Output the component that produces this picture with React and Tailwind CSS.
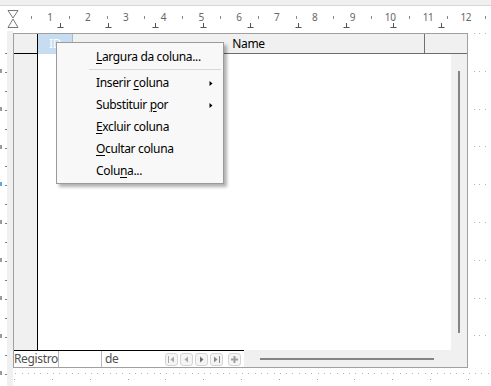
import React from 'react';

const CM = 37.8;
const ORIGIN = 12.2;

const Ruler = () => {
  const nums = Array.from({ length: 12 }, (_, i) => i + 1);
  const halves = Array.from({ length: 13 }, (_, i) => ORIGIN + CM * (i + 0.5));
  const tabs = Array.from({ length: 9 }, (_, i) => 60 + i * 47.6);
  return (
    <div className="relative h-[25px] bg-white">
      <svg className="absolute left-0 top-0" width="491" height="25">
        <path d="M8 4.5H18L13 12Z M13 13L18 21.5H8Z" fill="none" stroke="#777" strokeWidth="1" />
        {halves.map((x, i) => (
          <line key={'h' + i} x1={Math.round(x) + 0.5} x2={Math.round(x) + 0.5} y1="10" y2="13" stroke="#8a8a8a" />
        ))}
        {tabs.map((x, i) => (
          <g key={'t' + i} stroke="#555">
            <line x1={Math.round(x) + 0.5} x2={Math.round(x) + 0.5} y1="17" y2="21" />
            <line x1={Math.round(x) - 2.5} x2={Math.round(x) + 3.5} y1="21.5" y2="21.5" />
          </g>
        ))}
      </svg>
      {nums.map((n) => (
        <span
          key={n}
          className="absolute top-[5px] w-[16px] -ml-[8px] text-center text-[10px] leading-[12px] text-[#666]"
          style={{ left: ORIGIN + n * CM }}
        >
          {n}
        </span>
      ))}
    </div>
  );
};

const VRuler = () => {
  const ticks = Array.from({ length: 18 }, (_, i) => 22 + i * 18.9);
  const marks = Array.from({ length: 9 }, (_, i) => 40 + i * 37.8);
  return (
    <svg width="7" height="355" className="block">
      {ticks.map((y, i) => (
        <line key={i} x1="5" x2="7" y1={Math.round(y) + 0.5} y2={Math.round(y) + 0.5} stroke={i === 1 || i === 7 ? '#4a8fd0' : '#7a7a7a'} />
      ))}
      {marks.map((y, i) => (
        <rect key={i} x="0" y={Math.round(y) - 2} width="2" height="4" fill={i === 3 ? '#6aa0d8' : '#9a9a9a'} />
      ))}
    </svg>
  );
};

const RightDots = () => (
  <svg width="23" height="335" className="block bg-white">
    {Array.from({ length: 9 }, (_, k) => (
      <g key={k} fill="#b4b4b4">
        {[6, 11, 17].map((x) => (
          <rect key={x} x={x} y={Math.round(k * CM)} width="1" height="1" />
        ))}
      </g>
    ))}
  </svg>
);

const BottomDots = () => (
  <svg width="478" height="18" className="block bg-white">
    {Array.from({ length: 78 }, (_, k) => (
      <rect key={k} x={Math.round(ORIGIN + 6.3 * k - 13 + 3)} y="5" width="1" height="1" fill="#b4b4b4" />
    ))}
    {Array.from({ length: 13 }, (_, k) => (
      <rect key={'b' + k} x={Math.round(ORIGIN + CM * k - 13 + 2)} y="11" width="1" height="1" fill="#a0a0a0" />
    ))}
  </svg>
);

const NavBtn = ({ children, className = '' }) => (
  <div className={`w-[13px] h-[13px] rounded-[3px] border border-[#d4d4d4] bg-[#f5f5f5] flex items-center justify-center ${className}`}>
    {children}
  </div>
);

const Grid = () => (
  <div className="w-[455px] h-[335px] border border-[#a0a0a0] flex flex-col bg-[#f0f0f0]">
    <div className="flex h-[20px]">
      <div className="w-[24px] bg-[#f0f0f0] border-r border-b border-black" />
      <div className="w-[35px] bg-[#c6dcf0] border-r border-[#a8bccf] flex items-center justify-center text-white text-[12px]">
        ID
      </div>
      <div className="w-[352px] border-r border-b border-[#707070] border-b-[#6c6c6c] flex items-center justify-center text-[12px] text-black">
        Name
      </div>
      <div className="flex-1 border-b border-[#6c6c6c]" />
    </div>
    <div className="flex flex-1">
      <div className="flex flex-col w-[437px]">
        <div className="flex flex-1">
          <div className="w-[24px] bg-[#f0f0f0] border-r border-black" />
          <div className="flex-1 bg-white" />
        </div>
        <div className="flex h-[17px]">
          <div className="flex w-[230px] border-t border-black bg-white text-[#505050] text-[12px]">
            <div className="w-[45px] border-r border-[#b8b8b8] leading-[15px] whitespace-nowrap">Registro</div>
            <div className="w-[43px] border-r border-[#b8b8b8]" />
            <div className="w-[63px] pl-[3px] leading-[15px]">de</div>
            <div className="flex items-center gap-[2px]">
              <NavBtn>
                <svg width="7" height="7"><rect x="0" y="0" width="1" height="7" fill="#a8a8a8" /><path d="M6 0.5L2.5 3.5L6 6.5Z" fill="#a8a8a8" /></svg>
              </NavBtn>
              <NavBtn>
                <svg width="5" height="7"><path d="M4 0.5L0.5 3.5L4 6.5Z" fill="#a8a8a8" /></svg>
              </NavBtn>
              <NavBtn>
                <svg width="5" height="7"><path d="M1 0.5L4.5 3.5L1 6.5Z" fill="#6e6e6e" /></svg>
              </NavBtn>
              <NavBtn>
                <svg width="7" height="7"><path d="M1 0.5L4.5 3.5L1 6.5Z" fill="#8a8a8a" /><rect x="6" y="0" width="1" height="7" fill="#8a8a8a" /></svg>
              </NavBtn>
              <NavBtn className="ml-[3px]">
                <svg width="7" height="7"><path d="M2.5 0H4.5V2.5H7V4.5H4.5V7H2.5V4.5H0V2.5H2.5Z" fill="#a0a0a0" /></svg>
              </NavBtn>
            </div>
          </div>
          <div className="flex-1 bg-[#f0f0f0] pl-[16px] pt-[8px]">
            <div className="w-[174px] h-[2px] bg-[#848484]" />
          </div>
        </div>
      </div>
      <div className="w-[16px] bg-[#f0f0f0] pt-[17px] pl-[7px]">
        <div className="w-[2px] h-[262px] bg-[#848484]" />
      </div>
    </div>
  </div>
);

const Arrow = () => (
  <svg width="4" height="7" className="ml-auto">
    <path d="M0.5 1L3.5 3.5L0.5 6Z" fill="#000" />
  </svg>
);

const Item = ({ children, sub }) => (
  <div className="flex items-center h-[22px] pl-[39px] pr-[10px] whitespace-nowrap">
    <span>{children}</span>
    {sub && <Arrow />}
  </div>
);

const U = ({ children }) => <span className="underline underline-offset-[2px] decoration-1">{children}</span>;

const ContextMenu = () => (
  <div className="absolute left-[56px] top-[42px] w-[168px] border border-[#9a9a9a] bg-[#f8f8f8] pt-[3px] pb-[1px] text-[12px] text-black shadow-[3px_3px_3px_rgba(0,0,0,0.3)]">
    <Item><U>L</U>argura da coluna...</Item>
    <div className="h-[4px] pt-[1px] pl-[32px] pr-[2px]">
      <div className="h-[1px] bg-[#d8d8d8]" />
    </div>
    <Item sub>Inserir <U>c</U>oluna</Item>
    <Item sub>Substituir <U>p</U>or</Item>
    <Item><U>E</U>xcluir coluna</Item>
    <Item><U>O</U>cultar coluna</Item>
    <Item>Colu<U>n</U>a...</Item>
  </div>
);

export default function App() {
  return (
    <div className="relative w-[491px] h-[386px] overflow-hidden bg-white font-['Noto_Sans',sans-serif] tracking-[-0.35px]">
      <div className="h-[6px] bg-[#f0f0f0] border-b border-[#d6d6d6]" />
      <Ruler />
      <div className="flex h-[355px]">
        <VRuler />
        <div className="w-[6px] bg-[#f0f0f0]" />
        <div className="flex flex-col">
          <div className="h-[2px]" />
          <div className="flex">
            <Grid />
            <RightDots />
          </div>
          <BottomDots />
        </div>
      </div>
      <ContextMenu />
    </div>
  );
}
